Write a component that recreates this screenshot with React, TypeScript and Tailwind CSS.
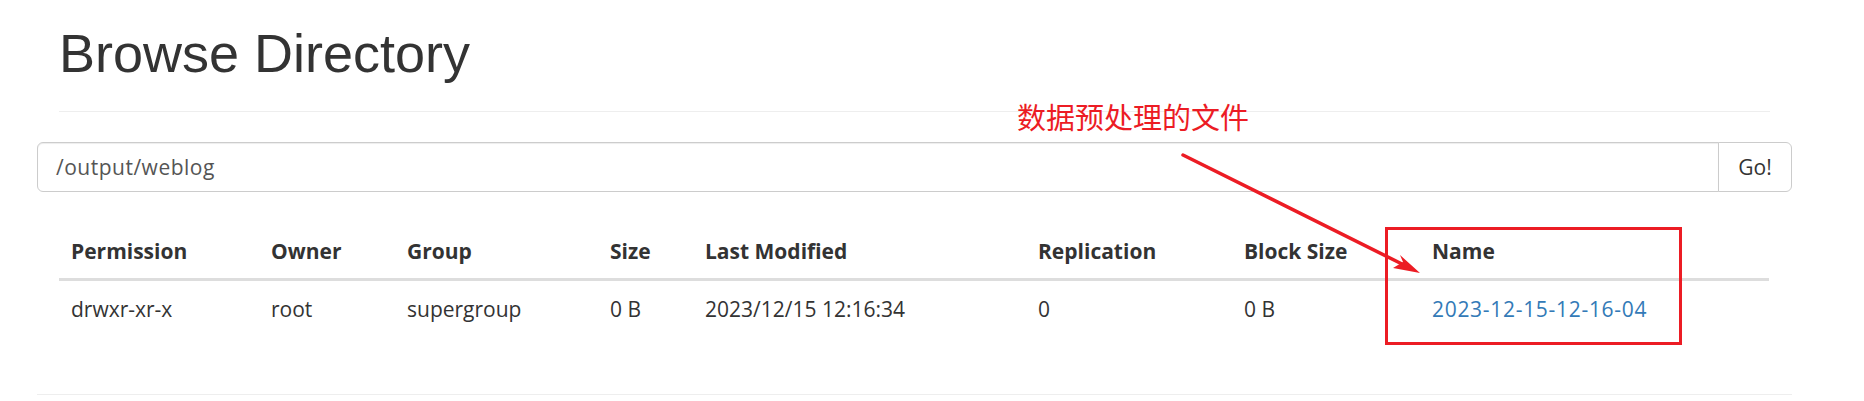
import React from "react";

const cols = [200, 136, 203, 95, 333, 206, 188, 349];
const heads = ["Permission", "Owner", "Group", "Size", "Last Modified", "Replication", "Block Size", "Name"];
const row = ["drwxr-xr-x", "root", "supergroup", "0 B", "2023/12/15 12:16:34", "0", "0 B"];

export default function App() {
  return (
    <div className="relative w-[1864px] h-[401px] bg-white overflow-hidden text-[#333]" style={{ fontFamily: '"Open Sans", sans-serif' }}>
      <div className="ml-[37px] w-[1755px]">
        <div className="px-[22px]">
          <div className="border-b border-[#eee] pb-[13px] mb-[30px]">
            <h1
              className="pt-[24px] mb-[15px] text-[54px] leading-[1.1] font-medium text-[#333]"
              style={{ fontFamily: '"Liberation Sans", Arial, sans-serif' }}
            >
              Browse Directory
            </h1>
          </div>
        </div>
        <div className="flex h-[50px]">
          <div className="flex-1 flex items-center border border-[#ccc] rounded-l-[6px] px-[18px] text-[21px] tracking-[0.5px] text-[#555] shadow-[inset_0_1px_1px_rgba(0,0,0,0.075)]">
            /output/weblog
          </div>
          <button className="w-[74px] -ml-px flex items-center justify-center border border-[#ccc] rounded-r-[6px] bg-white text-[21px] text-[#333]">
            Go!
          </button>
        </div>
        <div className="px-[22px] mt-[32px]">
          <table className="w-[1710px] table-fixed border-collapse text-[21px]">
            <colgroup>
              {cols.map((w, i) => (
                <col key={i} style={{ width: w }} />
              ))}
            </colgroup>
            <thead>
              <tr>
                {heads.map((h) => (
                  <th key={h} className="text-left font-bold px-[12px] py-[12px] leading-[30px] border-b-[3px] border-[#ddd] whitespace-nowrap">
                    {h}
                  </th>
                ))}
              </tr>
            </thead>
            <tbody>
              <tr>
                {row.map((c, i) => (
                  <td key={i} className="px-[12px] pt-[13px] pb-[11px] leading-[30px] whitespace-nowrap">
                    {c}
                  </td>
                ))}
                <td className="px-[12px] pt-[13px] pb-[11px] leading-[30px] whitespace-nowrap">
                  <a className="text-[#337ab7] tracking-[0.7px]">2023-12-15-12-16-04</a>
                </td>
              </tr>
            </tbody>
          </table>
        </div>
        <div className="mt-[59px] border-t border-[#eee]" />
      </div>

      <div
        className="absolute left-[1017px] top-[102px] text-[29px] leading-[1] text-[#ec1c24] whitespace-nowrap"
        style={{ fontFamily: '"Noto Sans CJK SC", sans-serif' }}
      >
        数据预处理的文件
      </div>
      <div className="absolute left-[1385px] top-[227px] w-[297px] h-[118px] border-[3px] border-[#ec1c24]" />
      <svg className="absolute left-0 top-0 pointer-events-none" width="1864" height="401">
        <line x1="1183" y1="155" x2="1406" y2="266" stroke="#ec1c24" strokeWidth="3.5" strokeLinecap="round" />
        <polygon points="1420,273 1400,255 1403,262 1393,268" fill="#ec1c24" />
      </svg>
    </div>
  );
}
